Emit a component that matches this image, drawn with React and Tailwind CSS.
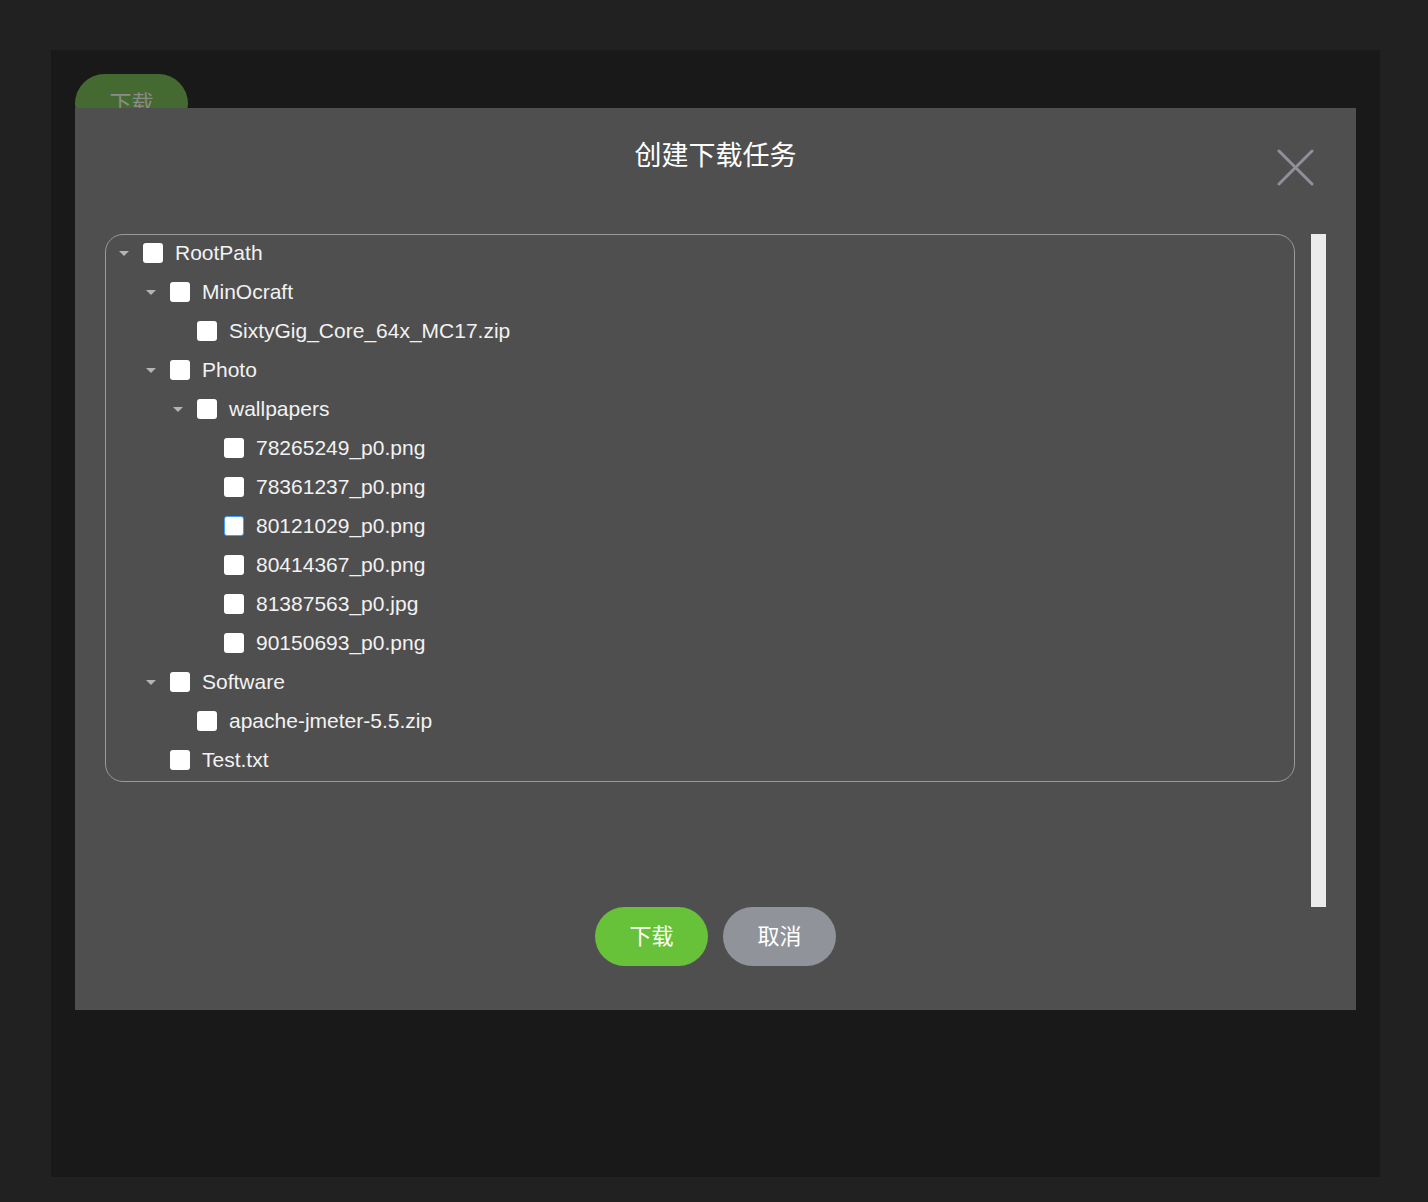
import React, { useState } from "react";

const tree = [
  {
    label: "RootPath",
    children: [
      { label: "MinOcraft", children: [{ label: "SixtyGig_Core_64x_MC17.zip" }] },
      {
        label: "Photo",
        children: [
          {
            label: "wallpapers",
            children: [
              { label: "78265249_p0.png" },
              { label: "78361237_p0.png" },
              { label: "80121029_p0.png", focus: true },
              { label: "80414367_p0.png" },
              { label: "81387563_p0.jpg" },
              { label: "90150693_p0.png" },
            ],
          },
        ],
      },
      { label: "Software", children: [{ label: "apache-jmeter-5.5.zip" }] },
      { label: "Test.txt" },
    ],
  },
];

const flatten = (nodes, level = 0, out = []) => {
  nodes.forEach((n) => {
    out.push({ ...n, level });
    if (n.children) flatten(n.children, level + 1, out);
  });
  return out;
};

const font = { fontFamily: '"Liberation Sans", "Noto Sans CJK SC", sans-serif' };

function Row({ node }) {
  const [checked, setChecked] = useState(false);
  return (
    <div className="flex h-[39px] items-center pb-[3px]" style={{ paddingLeft: 12 + node.level * 27 }}>
      <span className="flex h-[12px] w-[12px] items-center justify-center">
        {node.children && (
          <svg width="12" height="7" viewBox="0 0 12 7">
            <polygon points="1,1 11,1 6,6" fill="#b4b4b4" />
          </svg>
        )}
      </span>
      <button
        onClick={() => setChecked(!checked)}
        className={`ml-[13px] h-[20px] w-[20px] rounded-[3px] bg-white ${node.focus ? "border border-[#409eff]" : ""}`}
      />
      <span className="ml-[12px] text-[21px] text-[#f2f2f2]">{node.label}</span>
    </div>
  );
}

export default function App() {
  const rows = flatten(tree);
  return (
    <div className="min-h-[1202px] bg-[#212121] pb-[25px] pl-[51px] pr-[48px] pt-[50px]" style={font}>
      <div className="relative h-[1127px] bg-[#191919] pl-[24px] pt-[24px]">
        <button className="flex h-[59px] w-[113px] items-center justify-center rounded-full bg-[#446a31] text-[22px] text-[#8a8a8a]">
          下载
        </button>

        {/* Dialog */}
        <div className="absolute left-[24px] top-[58px] w-[1281px] bg-[#4f4f4f] px-[30px] pb-[44px]">
          <div className="h-[126px] pt-[29px] text-center text-[27px] leading-[38px] text-white">创建下载任务</div>
          <button className="absolute right-[42px] top-[41px]">
            <svg width="37" height="37" viewBox="0 0 37 37">
              <path d="M2 2L35 35M35 2L2 35" stroke="#8f9099" strokeWidth="3" strokeLinecap="round" />
            </svg>
          </button>

          <div className="flex h-[673px] gap-[16px]">
            <div className="flex-1">
              <div className="rounded-[18px] border border-[#9a9a9a]">
                {rows.map((r) => (
                  <Row key={r.label} node={r} />
                ))}
              </div>
            </div>
            <div className="h-[673px] w-[15px] bg-[#ebebeb]" />
          </div>

          <div className="flex justify-center gap-[15px]">
            <button className="h-[59px] w-[113px] rounded-full bg-[#67c23a] text-[22px] text-white">下载</button>
            <button className="h-[59px] w-[113px] rounded-full bg-[#909399] text-[22px] text-white">取消</button>
          </div>
        </div>
      </div>
    </div>
  );
}
